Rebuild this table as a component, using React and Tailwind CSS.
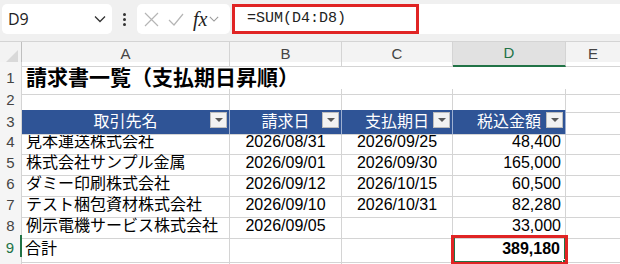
import React from "react";

const font = { fontFamily: '"Liberation Sans", "Noto Sans CJK JP", sans-serif' };
const grid = "grid grid-cols-[22px_208px_112px_111px_113px_54px]";

const rows = [
  ["見本運送株式会社", "2026/08/31", "2026/09/25", "48,400"],
  ["株式会社サンプル金属", "2026/09/01", "2026/09/30", "165,000"],
  ["ダミー印刷株式会社", "2026/09/12", "2026/10/15", "60,500"],
  ["テスト梱包資材株式会社", "2026/09/10", "2026/10/31", "82,280"],
  ["例示電機サービス株式会社", "2026/09/05", "", "33,000"],
];

function Chevron({ className }) {
  return (
    <svg width="12" height="8" viewBox="0 0 12 8" className={className}>
      <path d="M1 1.5 L6 6.5 L11 1.5" fill="none" stroke="currentColor" strokeWidth="1.3" />
    </svg>
  );
}

function FilterButton() {
  return (
    <div className="absolute right-[2px] top-[2px] w-[17px] h-[16px] bg-[#f2f2f2] border border-[#bdbdbd] flex items-center justify-center">
      <div className="w-0 h-0 border-l-[4px] border-r-[4px] border-t-[4px] border-l-transparent border-r-transparent border-t-[#595959]" />
    </div>
  );
}

function RowHead({ n, active }) {
  return (
    <div
      className={
        "flex items-center justify-center border-r border-b border-[#d4d4d4] bg-[#f5f5f5] text-[15px] " +
        (active ? "text-[#217346] border-r-2 border-r-[#217346]" : "text-[#444]")
      }
    >
      {n}
    </div>
  );
}

export default function App() {
  return (
    <div className="w-[620px] h-[264px] overflow-hidden bg-white text-black" style={font}>
      {/* Formula bar */}
      <div className="h-[41px] bg-[#f0f0f0] flex items-start pt-[4px] pl-[2px]">
        <div className="w-[110px] h-[30px] bg-white rounded-[5px] flex items-center justify-between pl-[6px] pr-[6px]">
          <span className="text-[16px] text-[#222]" style={{ fontFamily: '"Open Sans", sans-serif' }}>D9</span>
          <Chevron className="text-[#333]" />
        </div>
        <div className="w-[25px] h-[30px] flex flex-col items-center justify-center gap-[2px]">
          <div className="w-[3px] h-[3px] bg-[#333] rounded-full" />
          <div className="w-[3px] h-[3px] bg-[#333] rounded-full" />
          <div className="w-[3px] h-[3px] bg-[#333] rounded-full" />
        </div>
        <div className="w-[93px] h-[30px] bg-white rounded-[5px] flex items-center pl-[7px] gap-[9px]">
          <svg width="15" height="15" viewBox="0 0 15 15">
            <path d="M1 1 L14 14 M14 1 L1 14" stroke="#b5b5b5" strokeWidth="1.2" />
          </svg>
          <svg width="16" height="13" viewBox="0 0 16 13">
            <path d="M1 7 L6 12 L15 1" fill="none" stroke="#b5b5b5" strokeWidth="1.2" />
          </svg>
          <div className="flex items-center gap-[2px]">
            <span className="italic text-[20px] leading-none text-[#222]" style={{ fontFamily: '"Liberation Serif", serif' }}>
              fx
            </span>
            <Chevron className="text-[#999] w-[10px]" />
          </div>
        </div>
        <div className="ml-[2px] flex-1 h-[30px] bg-white flex items-center">
          <div className="w-[187px] h-[30px] border-[3px] border-[#e02424] flex items-center pl-[12px]">
            <span className="text-[15px] text-[#222]" style={{ fontFamily: '"Liberation Mono", monospace' }}>
              =SUM(D4:D8)
            </span>
          </div>
        </div>
      </div>

      {/* Column headers */}
      <div className={grid + " h-[21px] bg-[#f3f3f3] text-[15px] text-[#444] border-t border-[#d4d4d4]"}>
        <div className="flex items-end justify-end pr-[3px] pb-[3px] border-r border-b border-[#bfbfbf]">
          <svg width="13" height="13" viewBox="0 0 13 13">
            <path d="M13 0 L13 13 L0 13 Z" fill="#d9d9d9" />
          </svg>
        </div>
        <div className="flex items-center justify-center border-r border-b border-[#d4d4d4]">A</div>
        <div className="flex items-center justify-center border-r border-b border-[#d4d4d4]">B</div>
        <div className="flex items-center justify-center border-r border-b border-[#d4d4d4]">C</div>
        <div className="flex items-center justify-center border-r border-[#d4d4d4] bg-[#e1e1e1] text-[#217346] border-b-2 border-b-[#217346]">D</div>
        <div className="flex items-center justify-center border-b border-[#d4d4d4]">E</div>
      </div>

      {/* Row 1 */}
      <div className={grid + " h-[27px]"}>
        <RowHead n="1" />
        <div className="col-span-4 flex items-center pl-[4px] border-b border-[#d4d4d4] font-bold text-[21px] whitespace-nowrap">
          請求書一覧（支払期日昇順）
        </div>
        <div className="border-b border-[#d4d4d4]" />
      </div>

      {/* Row 2 */}
      <div className={grid + " h-[21px]"}>
        <RowHead n="2" />
        <div className="border-r border-b border-[#d4d4d4]" />
        <div className="border-r border-b border-[#d4d4d4]" />
        <div className="border-r border-b border-[#d4d4d4]" />
        <div className="border-r border-b border-[#d4d4d4]" />
        <div className="border-b border-[#d4d4d4]" />
      </div>

      {/* Row 3 header */}
      <div className={grid + " h-[20px] text-[16px]"}>
        <RowHead n="3" />
        {["取引先名", "請求日", "支払期日", "税込金額"].map((h) => (
          <div key={h} className="relative flex items-center justify-center bg-[#2f5496] text-white border-r border-[#9fb1d2] border-b border-b-[#d4d4d4]">
            {h}
            <FilterButton />
          </div>
        ))}
        <div className="border-b border-[#d4d4d4]" />
      </div>

      {/* Data rows */}
      {rows.map((r, i) => (
        <div key={i} className={grid + " h-[21px] text-[16px]"}>
          <RowHead n={String(i + 4)} />
          <div className="flex items-center pl-[4px] border-r border-b border-[#d4d4d4] whitespace-nowrap">{r[0]}</div>
          <div className="flex items-center justify-center border-r border-b border-[#d4d4d4]">{r[1]}</div>
          <div className="flex items-center justify-center border-r border-b border-[#d4d4d4]">{r[2]}</div>
          <div className="flex items-center justify-end pr-[4px] border-r border-b border-[#d4d4d4]">{r[3]}</div>
          <div className="border-b border-[#d4d4d4]" />
        </div>
      ))}

      {/* Row 9 total */}
      <div className={grid + " h-[22px] text-[16px]"}>
        <RowHead n="9" active />
        <div className="flex items-center pl-[3px] border-r border-b border-[#d4d4d4]">合計</div>
        <div className="border-r border-b border-[#d4d4d4]" />
        <div className="border-r border-b border-[#d4d4d4]" />
        <div className="relative flex items-center justify-end pr-[4px] font-bold border-2 border-[#217346]">
          389,180
          <div className="absolute right-[-3px] bottom-[-3px] w-[5px] h-[5px] bg-[#217346] border border-white" />
          <div className="absolute left-[-4px] right-[-4px] top-[-2px] bottom-[-4px] border-[3px] border-[#e02424]" />
        </div>
        <div className="border-b border-[#d4d4d4]" />
      </div>

      {/* Row 10 (cut off at the window edge) */}
      <div className={grid + " h-[21px]"}>
        <div className="border-r border-[#d4d4d4] bg-[#f5f5f5]" />
        <div className="border-r border-[#d4d4d4]" />
        <div className="border-r border-[#d4d4d4]" />
        <div className="border-r border-[#d4d4d4]" />
        <div className="border-r border-[#d4d4d4]" />
        <div />
      </div>
    </div>
  );
}
